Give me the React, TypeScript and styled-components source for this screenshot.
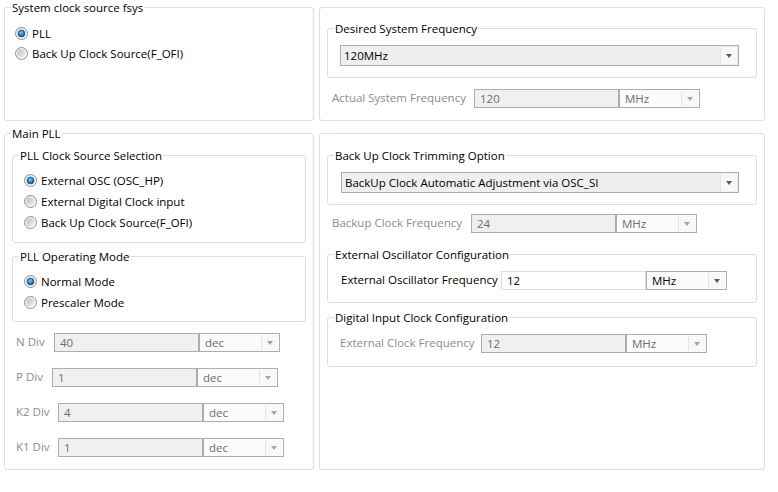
import React, { useId } from 'react';
import styled, { createGlobalStyle } from 'styled-components';

const GlobalStyle = createGlobalStyle`
  html, body { margin: 0; padding: 0; background: #ffffff; }
  body {
    font-family: "Open Sans", "Liberation Sans", sans-serif;
    font-size: 11.5px;
    color: #000000;
  }
`;

const Page = styled.div`
  box-sizing: border-box;
  width: 778px;
  height: 492px;
  padding: 7px 0 0 4px;
  display: grid;
  grid-template-columns: 310px 446px;
  grid-template-rows: 114px 337px;
  column-gap: 5px;
  row-gap: 12px;
`;

const Group = styled.div<{ $pad: string; $h?: number }>`
  position: relative;
  box-sizing: border-box;
  border: 1px solid #d5dfe5;
  border-radius: 3px;
  display: flex;
  flex-direction: column;
  padding: ${(p) => p.$pad};
  ${(p) => (p.$h ? `height: ${p.$h}px; flex: none;` : '')}
`;

const GroupTitle = styled.span`
  position: absolute;
  top: -8px;
  left: 6px;
  padding: 0 1px;
  background: #ffffff;
  line-height: 15px;
  white-space: nowrap;
  color: #000000;
`;

const RadioList = styled.div<{ $gap: number }>`
  display: flex;
  flex-direction: column;
  gap: ${(p) => p.$gap}px;
`;

const RadioRow = styled.label`
  display: flex;
  align-items: center;
  gap: 4px;
  height: 20px;
  white-space: nowrap;
  color: #000000;
`;

const RadioSvg = styled.svg`
  flex: none;
  display: block;
`;

const Spacer = styled.div<{ $h: number }>`
  flex: none;
  height: ${(p) => p.$h}px;
`;

const FieldRow = styled.div<{ $indent: number }>`
  display: flex;
  align-items: center;
  height: 19px;
  padding-left: ${(p) => p.$indent}px;
  flex: none;
`;

const FieldLabel = styled.span<{ $w: number; $off?: boolean }>`
  flex: none;
  width: ${(p) => p.$w}px;
  margin-top: -2px;
  white-space: nowrap;
  color: ${(p) => (p.$off ? '#8c8c8c' : '#000000')};
`;

const TextBox = styled.div<{ $off?: boolean }>`
  flex: none;
  box-sizing: border-box;
  width: 145px;
  height: 19px;
  display: flex;
  align-items: center;
  padding-left: 5px;
  border: 1px solid ${(p) => (p.$off ? '#adadad' : '#dcdcdc')};
  background: ${(p) => (p.$off ? '#f0f0f0' : '#ffffff')};
  color: ${(p) => (p.$off ? '#6d6d6d' : '#000000')};
`;

const Combo = styled.div<{ $off?: boolean; $wide?: boolean }>`
  box-sizing: border-box;
  ${(p) => (p.$wide ? 'height: 21px; padding-left: 3px;' : 'width: 81px; height: 19px; flex: none; padding-left: 5px;')}
  display: flex;
  align-items: center;
  border: 1px solid #adadad;
  background: ${(p) => (p.$wide ? '#efefef' : '#fbfbfb')};
  color: ${(p) => (p.$off ? '#6d6d6d' : '#000000')};
`;

const ComboText = styled.span`
  flex: 1;
  white-space: nowrap;
`;

const ComboButton = styled.span<{ $off?: boolean }>`
  flex: none;
  align-self: stretch;
  width: 16px;
  margin: 1px;
  border-left: 1px solid #e4e4e4;
  background: #f8f8f8;
  display: flex;
  align-items: center;
  justify-content: center;
  &::after {
    content: '';
    width: 0;
    height: 0;
    border-left: 3.5px solid transparent;
    border-right: 3.5px solid transparent;
    border-top: 4px solid ${(p) => (p.$off ? '#a5a5a5' : '#5a5a5a')};
  }
`;

function Radio({ checked }: { checked?: boolean }) {
  const id = useId().replace(/:/g, '');
  return (
    <RadioSvg width="13" height="13" viewBox="0 0 13 13">
      <defs>
        <linearGradient id={`o${id}`} x1="0" y1="0" x2="1" y2="1">
          <stop offset="0" stopColor="#e4e4e4" />
          <stop offset="1" stopColor="#ffffff" />
        </linearGradient>
        <radialGradient id={`b${id}`} cx="0.45" cy="0.4" r="0.6">
          <stop offset="0" stopColor="#8fd3f7" />
          <stop offset="0.5" stopColor="#2b8ad0" />
          <stop offset="1" stopColor="#0f4a86" />
        </radialGradient>
        <linearGradient id={`g${id}`} x1="0" y1="0" x2="1" y2="1">
          <stop offset="0" stopColor="#bcbcbc" />
          <stop offset="1" stopColor="#f4f4f4" />
        </linearGradient>
      </defs>
      <circle cx="6.5" cy="6.5" r="6" fill={`url(#o${id})`} stroke="#8e8f8f" strokeWidth="1" />
      {checked ? (
        <circle cx="6.5" cy="6.5" r="3.5" fill={`url(#b${id})`} stroke="#1a4f80" strokeWidth="0.6" />
      ) : (
        <circle cx="6.5" cy="6.5" r="4" fill={`url(#g${id})`} />
      )}
    </RadioSvg>
  );
}

function RadioItem({ label, checked }: { label: string; checked?: boolean }) {
  return (
    <RadioRow>
      <Radio checked={checked} />
      <span>{label}</span>
    </RadioRow>
  );
}

function Field({
  label,
  value,
  unit,
  labelWidth,
  indent,
  off = true,
}: {
  label: string;
  value: string;
  unit: string;
  labelWidth: number;
  indent: number;
  off?: boolean;
}) {
  return (
    <FieldRow $indent={indent}>
      <FieldLabel $w={labelWidth} $off={off}>{label}</FieldLabel>
      <TextBox $off={off}>{value}</TextBox>
      <Combo $off={off}>
        <ComboText>{unit}</ComboText>
        <ComboButton $off={off} />
      </Combo>
    </FieldRow>
  );
}

function WideCombo({ text }: { text: string }) {
  return (
    <Combo $wide>
      <ComboText>{text}</ComboText>
      <ComboButton />
    </Combo>
  );
}

export default function App() {
  return (
    <>
      <GlobalStyle />
      <Page>
        <Group $pad="15px 10px 0 10px">
          <GroupTitle>System clock source fsys</GroupTitle>
          <RadioList $gap={0}>
            <RadioItem label="PLL" checked />
            <RadioItem label="Back Up Clock Source(F_OFI)" />
          </RadioList>
        </Group>

        <Group $pad="20px 7px 0 7px">
          <Group $pad="16px 17px 0 12px" $h={50}>
            <GroupTitle>Desired System Frequency</GroupTitle>
            <WideCombo text="120MHz" />
          </Group>
          <Spacer $h={11} />
          <Field label="Actual System Frequency" value="120" unit="MHz" labelWidth={142} indent={5} />
        </Group>

        <Group $pad="21px 7px 0 7px">
          <GroupTitle>Main PLL</GroupTitle>
          <Group $pad="14px 0 0 11px" $h={88}>
            <GroupTitle>PLL Clock Source Selection</GroupTitle>
            <RadioList $gap={1}>
              <RadioItem label="External OSC (OSC_HP)" checked />
              <RadioItem label="External Digital Clock input" />
              <RadioItem label="Back Up Clock Source(F_OFI)" />
            </RadioList>
          </Group>
          <Spacer $h={13} />
          <Group $pad="14px 0 0 11px" $h={66}>
            <GroupTitle>PLL Operating Mode</GroupTitle>
            <RadioList $gap={1}>
              <RadioItem label="Normal Mode" checked />
              <RadioItem label="Prescaler Mode" />
            </RadioList>
          </Group>
          <Spacer $h={11} />
          <Field label="N Div" value="40" unit="dec" labelWidth={38} indent={4} />
          <Spacer $h={16} />
          <Field label="P Div" value="1" unit="dec" labelWidth={36} indent={4} />
          <Spacer $h={16} />
          <Field label="K2 Div" value="4" unit="dec" labelWidth={42} indent={4} />
          <Spacer $h={16} />
          <Field label="K1 Div" value="1" unit="dec" labelWidth={42} indent={4} />
        </Group>

        <Group $pad="21px 7px 0 7px">
          <Group $pad="16px 17px 0 13px" $h={50}>
            <GroupTitle>Back Up Clock Trimming Option</GroupTitle>
            <WideCombo text="BackUp Clock Automatic Adjustment via OSC_SI" />
          </Group>
          <Spacer $h={9} />
          <Field label="Backup Clock Frequency" value="24" unit="MHz" labelWidth={139} indent={5} />
          <Spacer $h={21} />
          <Group $pad="16px 0 0 0" $h={49}>
            <GroupTitle>External Oscillator Configuration</GroupTitle>
            <Field label="External Oscillator Frequency" value="12" unit="MHz" labelWidth={160} indent={13} off={false} />
          </Group>
          <Spacer $h={14} />
          <Group $pad="16px 0 0 0" $h={50}>
            <GroupTitle>Digital Input Clock Configuration</GroupTitle>
            <Field label="External Clock Frequency" value="12" unit="MHz" labelWidth={141} indent={12} />
          </Group>
        </Group>
      </Page>
    </>
  );
}
